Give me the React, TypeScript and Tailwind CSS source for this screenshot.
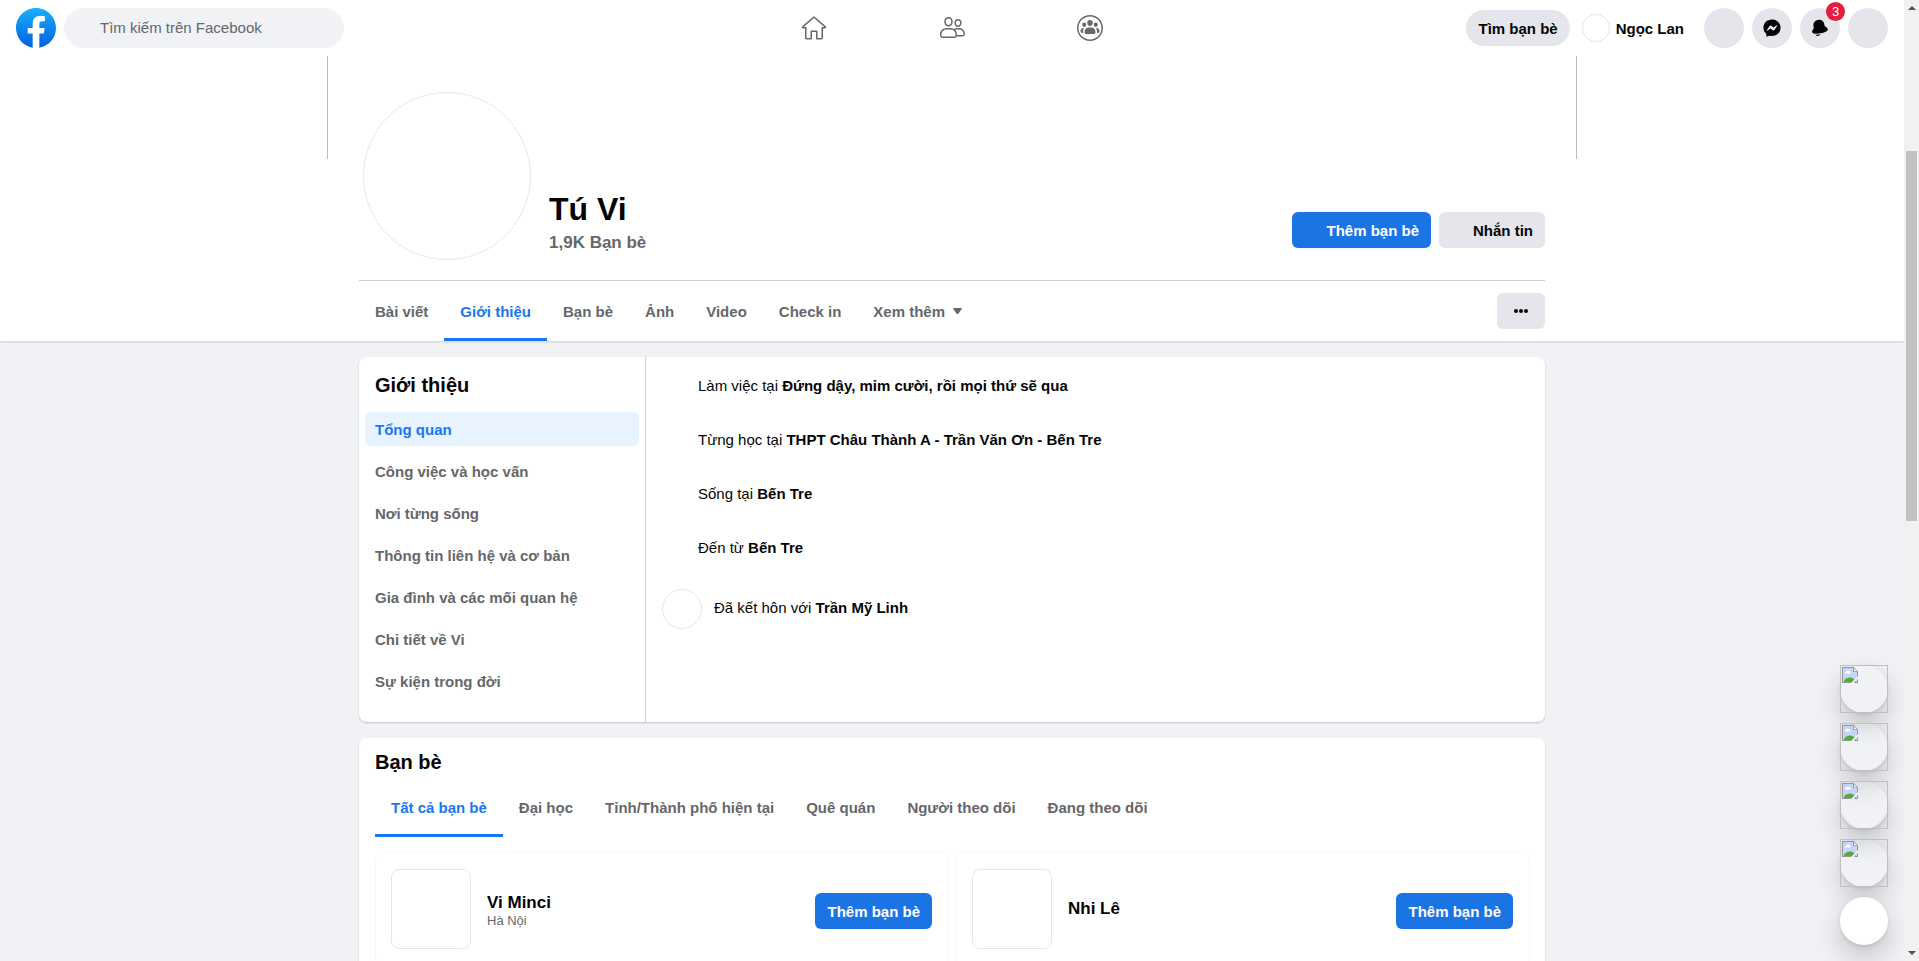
import type { ReactNode } from "react";

const profileTabs = ["Bài viết", "Giới thiệu", "Bạn bè", "Ảnh", "Video", "Check in"];

const aboutSections = [
  "Tổng quan",
  "Công việc và học vấn",
  "Nơi từng sống",
  "Thông tin liên hệ và cơ bản",
  "Gia đình và các mối quan hệ",
  "Chi tiết về Vi",
  "Sự kiện trong đời",
];

const facts = [
  { label: "Làm việc tại", value: "Đứng dậy, mỉm cười, rồi mọi thứ sẽ qua" },
  { label: "Từng học tại", value: "THPT Châu Thành A - Trần Văn Ơn - Bến Tre" },
  { label: "Sống tại", value: "Bến Tre" },
  { label: "Đến từ", value: "Bến Tre" },
];

const friendTabs = [
  "Tất cả bạn bè",
  "Đại học",
  "Tỉnh/Thành phố hiện tại",
  "Quê quán",
  "Người theo dõi",
  "Đang theo dõi",
];

const friends = [
  { name: "Vi Minci", place: "Hà Nội" },
  { name: "Nhi Lê", place: "" },
];

function FacebookLogo() {
  return (
    <svg viewBox="0 0 36 36" className="h-10 w-10 shrink-0">
      <defs>
        <linearGradient id="fb" x1="50%" x2="50%" y1="97.08%" y2="0%">
          <stop offset="0%" stopColor="#0062E0" />
          <stop offset="100%" stopColor="#19AFFF" />
        </linearGradient>
      </defs>
      <path fill="url(#fb)" d="M15 35.8C6.5 34.3 0 26.9 0 18 0 8.1 8.1 0 18 0s18 8.1 18 18c0 8.9-6.5 16.3-15 17.8l-1-.8h-4l-1 .8z" />
      <path fill="#fff" d="M25 23l.8-5H21v-3.5c0-1.4.5-2.5 2.7-2.5H26V7.4c-1.3-.2-2.7-.4-4-.4-4.1 0-7 2.5-7 7v4h-4.500v5H15v12.7c1 .2 2 .3 3 .3s2-.1 3-.3V23h4z" />
    </svg>
  );
}

const HOME =
  "M17.5 23.979 21.25 23.979C21.386 23.979 21.5 23.864 21.5 23.729L21.5 13.979C21.5 13.427 21.949 12.979 22.5 12.979L24.33 12.979 14.017 4.046 3.672 12.979 5.5 12.979C6.052 12.979 6.5 13.427 6.5 13.979L6.5 23.729C6.5 23.864 6.615 23.979 6.75 23.979L10.5 23.979 10.5 17.729C10.5 17.04 11.061 16.479 11.75 16.479L16.25 16.479C16.939 16.479 17.5 17.04 17.5 17.729L17.5 23.979ZM21.25 25.479 17 25.479C16.448 25.479 16 25.031 16 24.479L16 18.327C16 18.135 15.844 17.979 15.652 17.979L12.348 17.979C12.156 17.979 12 18.135 12 18.327L12 24.479C12 25.031 11.552 25.479 11 25.479L6.75 25.479C5.784 25.479 5 24.695 5 23.729L5 14.479 3.069 14.479C2.567 14.479 2.079 14.215 1.868 13.759 1.63 13.245 1.757 12.658 2.175 12.29L13.001 2.912C13.248 2.675 13.608 2.527 13.989 2.521 14.392 2.527 14.753 2.675 15.027 2.937L25.821 12.286C25.823 12.288 25.824 12.289 25.825 12.29 26.244 12.658 26.371 13.245 26.133 13.759 25.921 14.215 25.434 14.479 24.931 14.479L23 14.479 23 23.729C23 24.695 22.217 25.479 21.25 25.479Z";
const FRIENDS =
  "M10.5 4.5c-2.272 0-2.75 1.768-2.75 3.25C7.75 9.542 8.983 11 10.5 11s2.75-1.458 2.75-3.25c0-1.482-.478-3.25-2.75-3.25zm0 8c-2.344 0-4.25-2.131-4.25-4.75C6.25 4.776 7.839 3 10.5 3s4.25 1.776 4.25 4.75c0 2.619-1.906 4.75-4.25 4.75zm9.5-6c-1.41 0-2.125.841-2.125 2.5 0 1.378.953 2.5 2.125 2.5 1.172 0 2.125-1.122 2.125-2.5 0-1.659-.715-2.5-2.125-2.5zm0 6.5c-1.999 0-3.625-1.794-3.625-4 0-2.467 1.389-4 3.625-4 2.236 0 3.625 1.533 3.625 4 0 2.206-1.626 4-3.625 4zm4.622 8a.887.887 0 00.878-.894c0-2.54-2.043-4.606-4.555-4.606h-1.86c-.643 0-1.265.148-1.844.413a6.226 6.226 0 011.76 4.336V21h5.621zm-7.122.562v-1.313a4.755 4.755 0 00-4.749-4.749H8.25A4.755 4.755 0 003.5 20.249v1.313c0 .518.421.938.937.938h12.125c.517 0 .938-.42.938-.938zM20.945 14C24.285 14 27 16.739 27 20.106a2.388 2.388 0 01-2.378 2.394h-5.81a2.44 2.44 0 01-2.25 1.5H4.437A2.44 2.44 0 012 21.562v-1.313A6.256 6.256 0 018.25 14h4.501a6.2 6.2 0 013.218.902A5.932 5.932 0 0119.084 14h1.861z";
const GROUPS =
  "M25.5 14C25.5 7.649 20.351 2.5 14 2.5 7.649 2.5 2.5 7.649 2.5 14 2.5 20.351 7.649 25.5 14 25.5 20.351 25.5 25.5 20.351 25.5 14ZM27 14C27 21.18 21.18 27 14 27 6.82 27 1 21.18 1 14 1 6.82 6.82 1 14 1 21.18 1 27 6.82 27 14ZM7.479 14 7.631 14C7.933 14 8.102 14.338 7.934 14.591 7.334 15.491 6.983 16.568 6.983 17.724L6.983 18.221C6.983 18.342 6.99 18.461 7.004 18.578 7.03 18.802 6.862 19 6.637 19L6.123 19C5.228 19 4.5 18.25 4.5 17.327 4.5 15.492 5.727 14 7.479 14ZM20.521 14C22.274 14 23.5 15.492 23.5 17.327 23.5 18.25 22.772 19 21.878 19L21.364 19C21.139 19 20.97 18.802 20.997 18.578 21.01 18.461 21.017 18.342 21.017 18.221L21.017 17.724C21.017 16.568 20.667 15.491 20.067 14.591 19.899 14.338 20.067 14 20.369 14L20.521 14ZM8.25 13C7.147 13 6.25 11.991 6.25 10.75 6.25 9.384 7.035 8.5 8.25 8.5 9.465 8.5 10.25 9.384 10.25 10.75 10.25 11.991 9.353 13 8.25 13ZM19.75 13C18.647 13 17.75 11.991 17.75 10.75 17.75 9.384 18.535 8.5 19.75 8.5 20.965 8.5 21.75 9.384 21.75 10.75 21.75 11.991 20.853 13 19.75 13ZM15.172 13.5C17.558 13.5 19.5 15.395 19.5 17.724L19.5 18.221C19.5 19.202 18.683 20 17.677 20L10.323 20C9.317 20 8.5 19.202 8.5 18.221L8.5 17.724C8.5 15.395 10.441 13.5 12.828 13.5L15.172 13.5ZM16.75 9C16.75 10.655 15.517 12 14 12 12.484 12 11.25 10.655 11.25 9 11.25 7.15 12.304 6 14 6 15.697 6 16.75 7.15 16.75 9Z";
const MESSENGER =
  "M14 2.042c6.76 0 12 4.952 12 11.64S20.76 25.322 14 25.322a13.091 13.091 0 0 1-3.474-.461.956.956 0 0 0-.641.047L7.5 25.959a.961.961 0 0 1-1.348-.849l-.065-2.134a.957.957 0 0 0-.322-.684A11.389 11.389 0 0 1 2 13.682C2 6.994 7.24 2.042 14 2.042ZM6.794 17.086a.57.57 0 0 0 .827.758l3.786-2.874a.722.722 0 0 1 .868 0l2.8 2.1a1.8 1.8 0 0 0 2.6-.481l3.525-5.592a.57.57 0 0 0-.827-.758l-3.786 2.874a.722.722 0 0 1-.868 0l-2.8-2.1a1.8 1.8 0 0 0-2.6.481Z";
const BELL =
  "M7.847 23.488C9.207 23.488 11.443 23.363 14.467 22.806 13.944 24.228 12.581 25.247 10.98 25.247 9.649 25.247 8.483 24.542 7.825 23.488L7.847 23.488ZM24.923 15.73C25.17 17.002 24.278 18.127 22.27 19.076 21.17 19.595 18.724 20.583 14.684 21.369 11.568 21.974 9.285 22.113 7.848 22.113 7.421 22.113 7.068 22.101 6.79 22.085 4.574 21.958 3.324 21.248 3.077 19.976 2.702 18.049 3.295 17.305 4.278 16.073L4.537 15.748C5.2 14.907 5.459 14.081 5.035 11.902 4.086 7.022 6.284 3.687 11.064 2.753 15.846 1.83 19.134 4.096 20.083 8.977 20.506 11.156 21.056 11.824 21.986 12.355L21.986 12.356 22.348 12.561C23.72 13.335 24.548 13.802 24.923 15.73Z";

function NavIcon({ d }: { d: string }) {
  return (
    <svg viewBox="0 0 28 28" className="h-7 w-7 fill-[#65676b]">
      <path d={d} />
    </svg>
  );
}

function RoundButton({ d, children }: { d?: string; children?: ReactNode }) {
  return (
    <div className="relative flex h-10 w-10 items-center justify-center rounded-full bg-[#e4e6eb]">
      {d && (
        <svg viewBox="0 0 28 28" className="h-5 w-5 fill-[#050505]">
          <path d={d} />
        </svg>
      )}
      {children}
    </div>
  );
}

function Header() {
  return (
    <header className="relative z-10 flex h-14 shrink-0 items-center justify-between bg-white px-4">
      <div className="flex w-[560px] gap-2">
        <FacebookLogo />
        <div className="flex h-10 w-[280px] items-center rounded-full bg-[#f0f2f5] pl-9 text-[15px] text-[#65676b]">
          Tìm kiếm trên Facebook
        </div>
      </div>
      <nav className="flex gap-[110px]">
        <NavIcon d={HOME} />
        <NavIcon d={FRIENDS} />
        <NavIcon d={GROUPS} />
      </nav>
      <div className="flex w-[560px] items-center justify-end gap-2 font-bold">
        <div className="flex h-9 items-center rounded-full bg-[#e4e6eb] px-3 pt-0.5 whitespace-nowrap">Tìm bạn bè</div>
        <div className="mr-3 flex items-center gap-1.5 pl-1 whitespace-nowrap">
          <div className="h-7 w-7 rounded-full border border-black/10" />
          <span className="pt-0.5">Ngọc Lan</span>
        </div>
        <RoundButton />
        <RoundButton d={MESSENGER} />
        <RoundButton d={BELL}>
          <span className="absolute -top-1.5 -right-[5px] flex h-[19px] w-[19px] items-center justify-center rounded-full bg-[#e41e3f] text-[13px] font-normal text-white">
            3
          </span>
        </RoundButton>
        <RoundButton />
      </div>
    </header>
  );
}

function ProfileHeader() {
  return (
    <section className="flex h-[285px] shrink-0 justify-center bg-white shadow-[0_1px_2px_rgba(0,0,0,0.15)]">
      <div className="relative flex w-[1250px] flex-col px-8">
        {/* Side edges of the cover photo, which the avatar overlaps */}
        <div className="pointer-events-none absolute inset-x-0 top-0 h-[103px] border-x border-[#bbb]" />
        <div className="flex h-[224px] items-start pl-1">
          <div className="mt-9 h-[168px] w-[168px] rounded-full border border-black/10" />
          <div className="mt-[134px] ml-[18px] grow">
            <h1 className="text-[32px] leading-[38px] font-bold">Tú Vi</h1>
            <p className="mt-[5px] text-[17px] leading-5 font-bold text-[#65676b]">1,9K Bạn bè</p>
          </div>
          <div className="mt-[156px] flex gap-2 font-bold">
            <button className="h-9 rounded-md bg-[#1b74e4] pt-0.5 pr-3 pl-[34px] text-white">Thêm bạn bè</button>
            <button className="h-9 rounded-md bg-[#e4e6eb] pt-0.5 pr-3 pl-[34px]">Nhắn tin</button>
          </div>
        </div>
        <div className="flex h-[61px] items-center justify-between border-t border-[#ced0d4]">
          <div className="flex h-full font-bold text-[#65676b]">
            {profileTabs.map((tab) => (
              <div
                key={tab}
                className={
                  tab === "Giới thiệu"
                    ? "flex items-center border-b-[3px] border-[#1877f2] px-4 pt-[5px] text-[#1877f2]"
                    : "flex items-center px-4 pt-0.5"
                }
              >
                {tab}
              </div>
            ))}
            <div className="flex items-center gap-2 px-4 pt-0.5">
              Xem thêm
              <svg viewBox="0 0 8 6" preserveAspectRatio="none" className="mb-0.5 h-1.5 w-[9px] fill-[#65676b]">
                <path d="M.8 0h6.400q1.100 0 .5 1L4.900 5.400q-.9 1.200-1.800 0L.3 1Q-.3 0 .8 0Z" />
              </svg>
            </div>
          </div>
          <button className="flex h-9 w-12 items-center justify-center gap-px rounded-md bg-[#e4e6eb]">
            <i className="h-1 w-1 rounded-full bg-[#050505]" />
            <i className="h-1 w-1 rounded-full bg-[#050505]" />
            <i className="h-1 w-1 rounded-full bg-[#050505]" />
          </button>
        </div>
      </div>
    </section>
  );
}

function AboutCard() {
  return (
    <section className="flex h-[365px] shrink-0 rounded-lg bg-white shadow-[0_1px_2px_rgba(0,0,0,0.2)]">
      <div className="w-[287px] border-r border-[#ced0d4] px-1.5 pt-4">
        <h2 className="mb-[15px] pl-2.5 text-xl leading-6 font-bold">Giới thiệu</h2>
        <ul className="flex flex-col gap-2 font-bold text-[#65676b]">
          {aboutSections.map((item, i) => (
            <li
              key={item}
              className={
                i === 0
                  ? "flex h-[34px] items-center rounded-md bg-[#e7f3ff] pt-0.5 pl-2.5 text-[#1877f2]"
                  : "flex h-[34px] items-center pt-0.5 pl-2.5"
              }
            >
              {item}
            </li>
          ))}
        </ul>
      </div>
      <div className="px-4 pt-[19px]">
        <ul className="flex flex-col gap-[34px] pl-9">
          {facts.map((f) => (
            <li key={f.label}>
              {f.label} <b>{f.value}</b>
            </li>
          ))}
        </ul>
        <div className="mt-[31px] flex gap-3">
          <div className="h-10 w-10 rounded-full border border-black/10" />
          <p className="mt-[9px]">
            Đã kết hôn với <b>Trần Mỹ Linh</b>
          </p>
        </div>
      </div>
    </section>
  );
}

function FriendsCard() {
  return (
    <section className="h-[400px] shrink-0 rounded-lg bg-white px-4 pt-3 shadow-[0_1px_2px_rgba(0,0,0,0.2)]">
      <h2 className="text-xl leading-6 font-bold">Bạn bè</h2>
      <div className="mt-[3px] flex h-[60px] font-bold text-[#65676b]">
        {friendTabs.map((tab, i) => (
          <div
            key={tab}
            className={
              i === 0
                ? "flex items-center border-b-[3px] border-[#1877f2] px-4 pt-[5px] text-[#1877f2]"
                : "flex items-center px-4 pt-0.5"
            }
          >
            {tab}
          </div>
        ))}
      </div>
      <div className="mt-[15px] grid w-[1155px] grid-cols-2 gap-[7px]">
        {friends.map((f) => (
          <div key={f.name} className="flex h-[114px] items-center rounded-lg border border-black/[0.03] pr-4 pl-[15px]">
            <div className="h-20 w-20 rounded-lg border border-black/10" />
            <div className={f.place ? "ml-4 grow pt-1" : "ml-4 grow"}>
              <p className="text-[17px] leading-5 font-bold">{f.name}</p>
              {f.place && <p className="text-[13px] leading-4 text-[#65676b]">{f.place}</p>}
            </div>
            <button className="mt-1 h-9 rounded-md bg-[#1b74e4] px-3 pt-0.5 font-bold text-white">Thêm bạn bè</button>
          </div>
        ))}
      </div>
    </section>
  );
}

function BrokenImage() {
  return (
    <svg viewBox="0 0 16 16" className="h-4 w-4">
      <path d="M0 0h11.500L16 4.500V16H0Z" fill="#969696" />
      <path d="M1 1h10v4h4v10H1Z" fill="#c3d5f9" />
      <path d="M2.500 6.500q0-1.700 1.700-1.800Q5 3 6.700 3.800q2.100.2 1.900 2.700Z" fill="#fff" />
      <path d="M2 15v-1.200Q4.500 10.500 8 10.500q3.500 0 6 3.500v1Z" fill="#55ab35" />
      <path d="M12 1.500 14.800 4.300H12Z" fill="#fff" />
      <path d="M16 9 9 16h2.800L16 11.800Z" fill="#f0f2f5" />
    </svg>
  );
}

function ChatHeads() {
  return (
    <div className="absolute top-[665px] left-[1840px] flex flex-col gap-2.5">
      {[0, 1, 2, 3].map((i) => (
        <div key={i} className="h-12 w-12 rounded-full shadow-[0_12px_28px_rgba(0,0,0,0.2),0_2px_4px_rgba(0,0,0,0.1)]">
          <div className="h-12 w-12 border border-[#c0c0c0] p-px">
            <BrokenImage />
          </div>
        </div>
      ))}
      <div className="h-12 w-12 rounded-full bg-white shadow-[0_12px_28px_rgba(0,0,0,0.2),0_2px_4px_rgba(0,0,0,0.1)]" />
    </div>
  );
}

function Scrollbar() {
  return (
    <div className="relative z-10 flex w-[15px] flex-col items-center justify-between bg-[#f1f1f1] pt-1.5 pb-1.5">
      <svg viewBox="0 0 8 4" className="h-1 w-2 fill-[#505050]">
        <path d="M4 0 8 4H0Z" />
      </svg>
      <div className="mt-[141px] mb-auto h-[370px] w-[11px] bg-[#c1c1c1]" />
      <svg viewBox="0 0 8 4" className="h-1 w-2 fill-[#505050]">
        <path d="M0 0h8L4 4Z" />
      </svg>
    </div>
  );
}

export default function App() {
  return (
    <div className="relative flex h-[961px] w-[1919px] overflow-hidden bg-[#f0f2f5] font-['Liberation_Sans',Arial,sans-serif] text-[15px] leading-5 text-[#050505]">
      <div className="flex w-[1904px] flex-col">
        <Header />
        <ProfileHeader />
        <main className="mx-auto flex w-[1186px] flex-col gap-4 pt-4">
          <AboutCard />
          <FriendsCard />
        </main>
      </div>
      <ChatHeads />
      <Scrollbar />
    </div>
  );
}
